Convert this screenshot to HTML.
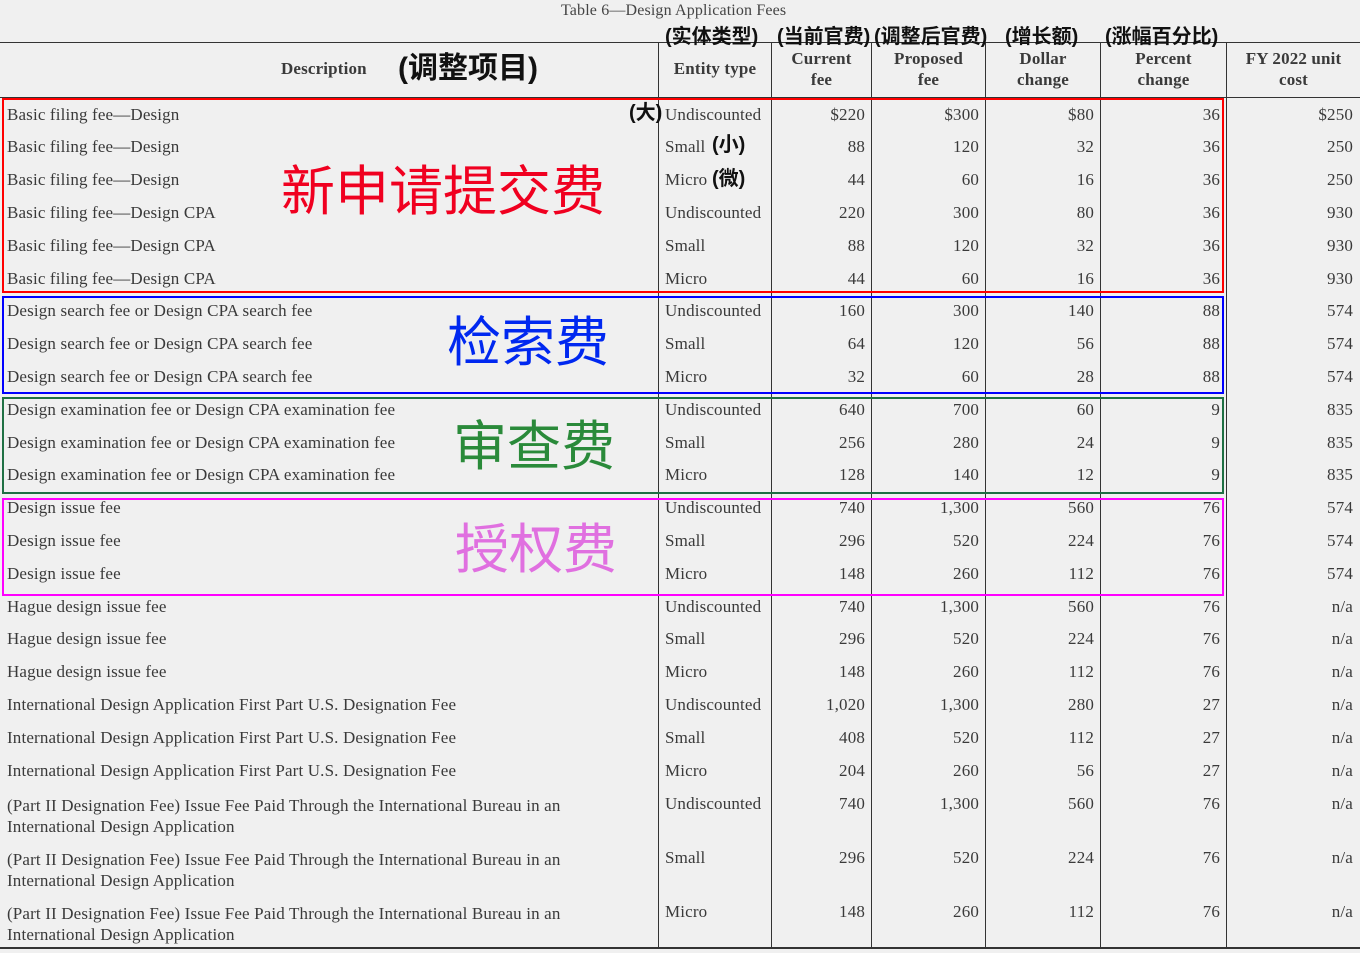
<!DOCTYPE html>
<html><head><meta charset="utf-8"><style>
body{margin:0;width:1360px;height:953px;background:#f0f0f0;position:relative;overflow:hidden;font-family:"Liberation Serif",serif;color:#3a3a3a;font-size:17px;letter-spacing:0.15px}
div{position:absolute;white-space:nowrap;line-height:18px}
.h{height:1px;background:#333;left:0;width:1360px}
.v{width:1px;background:#333;top:42px;height:907px}
.d,.e,.c,.p,.dl,.pc,.fy{transform:translateY(2px)}
.d{left:7px}
.e{left:665px}
.c{right:495px;text-align:right}
.p{right:381px}
.dl{right:266px}
.pc{right:140px}
.fy{right:7px}
.hd{font-weight:bold;color:#3a3a3a;font-size:17px;text-align:center;line-height:21px}
.zh{font-family:"Liberation Sans","Noto Sans CJK SC",sans-serif;font-weight:bold;color:#111;font-size:20px;line-height:22px;letter-spacing:0}
.box{border:2px solid;box-sizing:border-box;left:2px;width:1222px}
.big{font-family:"Noto Sans CJK SC",sans-serif;font-size:54px;line-height:60px;letter-spacing:0}
</style></head><body>
<div style="left:561px;top:2px;font-size:16px;color:#444">Table 6—Design Application Fees</div>
<div class="h" style="top:42px"></div>
<div class="h" style="top:97px"></div>
<div class="h" style="top:947px;height:2px"></div>
<div class="v" style="left:658px"></div>
<div class="v" style="left:771px;top:42px"></div>
<div class="v" style="left:871px"></div>
<div class="v" style="left:985px"></div>
<div class="v" style="left:1100px"></div>
<div class="v" style="left:1226px"></div>

<div class="hd" style="left:281px;top:58px">Description</div>
<div class="zh" style="left:398px;top:52px;font-size:30px;line-height:34px">(调整项目)</div>
<div class="hd" style="left:659px;width:112px;top:58px">Entity type</div>
<div class="hd" style="left:772px;width:99px;top:48px">Current<br>fee</div>
<div class="hd" style="left:872px;width:113px;top:48px">Proposed<br>fee</div>
<div class="hd" style="left:986px;width:114px;top:48px">Dollar<br>change</div>
<div class="hd" style="left:1101px;width:125px;top:48px">Percent<br>change</div>
<div class="hd" style="left:1227px;width:133px;top:48px">FY 2022 unit<br>cost</div>
<div class="zh" style="left:665px;top:26px">(实体类型)</div>
<div class="zh" style="left:777px;top:26px">(当前官费)</div>
<div class="zh" style="left:874px;top:26px">(调整后官费)</div>
<div class="zh" style="left:1005px;top:26px">(增长额)</div>
<div class="zh" style="left:1105px;top:26px">(涨幅百分比)</div>

<div class="box" style="top:98px;height:195px;border-color:#f00"></div>
<div class="box" style="top:296px;height:98px;border-color:#00f"></div>
<div class="box" style="top:397px;height:97px;border-color:#1f7044"></div>
<div class="box" style="top:498px;height:98px;border-color:#f0f"></div>
<div class="big" style="left:281px;top:157px;color:#f00020">新申请提交费</div>
<div class="big" style="left:447px;top:308px;color:#0028f0">检索费</div>
<div class="big" style="left:453px;top:412px;color:#2a8a3a">审查费</div>
<div class="big" style="left:455px;top:515px;color:#e070e0">授权费</div>
<div class="zh" style="left:629px;top:102px">(大)</div>
<div class="zh" style="left:712px;top:134px">(小)</div>
<div class="zh" style="left:712px;top:168px">(微)</div>

<div class="d" style="top:104px">Basic filing fee—Design</div><div class="e" style="top:104px">Undiscounted</div><div class="c" style="top:104px">$220</div><div class="p" style="top:104px">$300</div><div class="dl" style="top:104px">$80</div><div class="pc" style="top:104px">36</div><div class="fy" style="top:104px">$250</div>
<div class="d" style="top:136px">Basic filing fee—Design</div><div class="e" style="top:136px">Small</div><div class="c" style="top:136px">88</div><div class="p" style="top:136px">120</div><div class="dl" style="top:136px">32</div><div class="pc" style="top:136px">36</div><div class="fy" style="top:136px">250</div>
<div class="d" style="top:169px">Basic filing fee—Design</div><div class="e" style="top:169px">Micro</div><div class="c" style="top:169px">44</div><div class="p" style="top:169px">60</div><div class="dl" style="top:169px">16</div><div class="pc" style="top:169px">36</div><div class="fy" style="top:169px">250</div>
<div class="d" style="top:202px">Basic filing fee—Design CPA</div><div class="e" style="top:202px">Undiscounted</div><div class="c" style="top:202px">220</div><div class="p" style="top:202px">300</div><div class="dl" style="top:202px">80</div><div class="pc" style="top:202px">36</div><div class="fy" style="top:202px">930</div>
<div class="d" style="top:235px">Basic filing fee—Design CPA</div><div class="e" style="top:235px">Small</div><div class="c" style="top:235px">88</div><div class="p" style="top:235px">120</div><div class="dl" style="top:235px">32</div><div class="pc" style="top:235px">36</div><div class="fy" style="top:235px">930</div>
<div class="d" style="top:268px">Basic filing fee—Design CPA</div><div class="e" style="top:268px">Micro</div><div class="c" style="top:268px">44</div><div class="p" style="top:268px">60</div><div class="dl" style="top:268px">16</div><div class="pc" style="top:268px">36</div><div class="fy" style="top:268px">930</div>
<div class="d" style="top:300px">Design search fee or Design CPA search fee</div><div class="e" style="top:300px">Undiscounted</div><div class="c" style="top:300px">160</div><div class="p" style="top:300px">300</div><div class="dl" style="top:300px">140</div><div class="pc" style="top:300px">88</div><div class="fy" style="top:300px">574</div>
<div class="d" style="top:333px">Design search fee or Design CPA search fee</div><div class="e" style="top:333px">Small</div><div class="c" style="top:333px">64</div><div class="p" style="top:333px">120</div><div class="dl" style="top:333px">56</div><div class="pc" style="top:333px">88</div><div class="fy" style="top:333px">574</div>
<div class="d" style="top:366px">Design search fee or Design CPA search fee</div><div class="e" style="top:366px">Micro</div><div class="c" style="top:366px">32</div><div class="p" style="top:366px">60</div><div class="dl" style="top:366px">28</div><div class="pc" style="top:366px">88</div><div class="fy" style="top:366px">574</div>
<div class="d" style="top:399px">Design examination fee or Design CPA examination fee</div><div class="e" style="top:399px">Undiscounted</div><div class="c" style="top:399px">640</div><div class="p" style="top:399px">700</div><div class="dl" style="top:399px">60</div><div class="pc" style="top:399px">9</div><div class="fy" style="top:399px">835</div>
<div class="d" style="top:432px">Design examination fee or Design CPA examination fee</div><div class="e" style="top:432px">Small</div><div class="c" style="top:432px">256</div><div class="p" style="top:432px">280</div><div class="dl" style="top:432px">24</div><div class="pc" style="top:432px">9</div><div class="fy" style="top:432px">835</div>
<div class="d" style="top:464px">Design examination fee or Design CPA examination fee</div><div class="e" style="top:464px">Micro</div><div class="c" style="top:464px">128</div><div class="p" style="top:464px">140</div><div class="dl" style="top:464px">12</div><div class="pc" style="top:464px">9</div><div class="fy" style="top:464px">835</div>
<div class="d" style="top:497px">Design issue fee</div><div class="e" style="top:497px">Undiscounted</div><div class="c" style="top:497px">740</div><div class="p" style="top:497px">1,300</div><div class="dl" style="top:497px">560</div><div class="pc" style="top:497px">76</div><div class="fy" style="top:497px">574</div>
<div class="d" style="top:530px">Design issue fee</div><div class="e" style="top:530px">Small</div><div class="c" style="top:530px">296</div><div class="p" style="top:530px">520</div><div class="dl" style="top:530px">224</div><div class="pc" style="top:530px">76</div><div class="fy" style="top:530px">574</div>
<div class="d" style="top:563px">Design issue fee</div><div class="e" style="top:563px">Micro</div><div class="c" style="top:563px">148</div><div class="p" style="top:563px">260</div><div class="dl" style="top:563px">112</div><div class="pc" style="top:563px">76</div><div class="fy" style="top:563px">574</div>
<div class="d" style="top:596px">Hague design issue fee</div><div class="e" style="top:596px">Undiscounted</div><div class="c" style="top:596px">740</div><div class="p" style="top:596px">1,300</div><div class="dl" style="top:596px">560</div><div class="pc" style="top:596px">76</div><div class="fy" style="top:596px">n/a</div>
<div class="d" style="top:628px">Hague design issue fee</div><div class="e" style="top:628px">Small</div><div class="c" style="top:628px">296</div><div class="p" style="top:628px">520</div><div class="dl" style="top:628px">224</div><div class="pc" style="top:628px">76</div><div class="fy" style="top:628px">n/a</div>
<div class="d" style="top:661px">Hague design issue fee</div><div class="e" style="top:661px">Micro</div><div class="c" style="top:661px">148</div><div class="p" style="top:661px">260</div><div class="dl" style="top:661px">112</div><div class="pc" style="top:661px">76</div><div class="fy" style="top:661px">n/a</div>
<div class="d" style="top:694px">International Design Application First Part U.S. Designation Fee</div><div class="e" style="top:694px">Undiscounted</div><div class="c" style="top:694px">1,020</div><div class="p" style="top:694px">1,300</div><div class="dl" style="top:694px">280</div><div class="pc" style="top:694px">27</div><div class="fy" style="top:694px">n/a</div>
<div class="d" style="top:727px">International Design Application First Part U.S. Designation Fee</div><div class="e" style="top:727px">Small</div><div class="c" style="top:727px">408</div><div class="p" style="top:727px">520</div><div class="dl" style="top:727px">112</div><div class="pc" style="top:727px">27</div><div class="fy" style="top:727px">n/a</div>
<div class="d" style="top:760px">International Design Application First Part U.S. Designation Fee</div><div class="e" style="top:760px">Micro</div><div class="c" style="top:760px">204</div><div class="p" style="top:760px">260</div><div class="dl" style="top:760px">56</div><div class="pc" style="top:760px">27</div><div class="fy" style="top:760px">n/a</div>
<div class="d" style="top:793px;line-height:21px">(Part II Designation Fee) Issue Fee Paid Through the International Bureau in an<br>International Design Application</div><div class="e" style="top:793px">Undiscounted</div><div class="c" style="top:793px">740</div><div class="p" style="top:793px">1,300</div><div class="dl" style="top:793px">560</div><div class="pc" style="top:793px">76</div><div class="fy" style="top:793px">n/a</div>
<div class="d" style="top:847px;line-height:21px">(Part II Designation Fee) Issue Fee Paid Through the International Bureau in an<br>International Design Application</div><div class="e" style="top:847px">Small</div><div class="c" style="top:847px">296</div><div class="p" style="top:847px">520</div><div class="dl" style="top:847px">224</div><div class="pc" style="top:847px">76</div><div class="fy" style="top:847px">n/a</div>
<div class="d" style="top:901px;line-height:21px">(Part II Designation Fee) Issue Fee Paid Through the International Bureau in an<br>International Design Application</div><div class="e" style="top:901px">Micro</div><div class="c" style="top:901px">148</div><div class="p" style="top:901px">260</div><div class="dl" style="top:901px">112</div><div class="pc" style="top:901px">76</div><div class="fy" style="top:901px">n/a</div>
</body></html>
